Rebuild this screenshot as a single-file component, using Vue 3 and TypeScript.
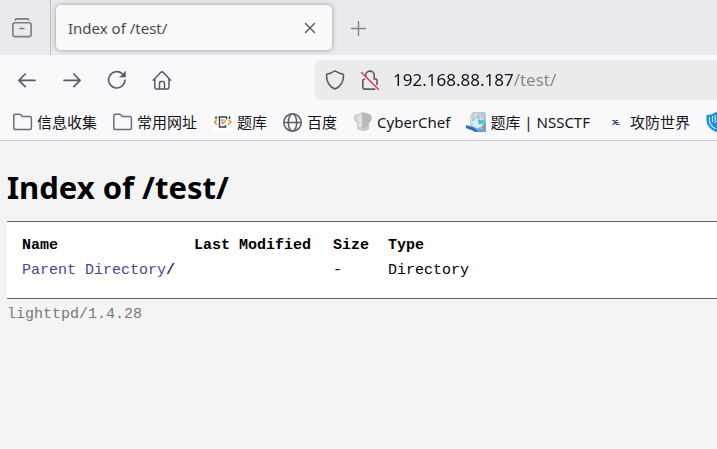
<script setup lang="ts">
import { ref } from 'vue'

type IconName = 'folder' | 'code' | 'globe' | 'chef' | 'avatar' | 'mark' | 'shield'

interface Bookmark {
  icon: IconName
  label: string
}

interface Entry {
  name: string
  modified: string
  size: string
  type: string
}

const address = ref('192.168.88.187/test/')

const bookmarks: Bookmark[] = [
  { icon: 'folder', label: '信息收集' },
  { icon: 'folder', label: '常用网址' },
  { icon: 'code', label: '题库' },
  { icon: 'globe', label: '百度' },
  { icon: 'chef', label: 'CyberChef' },
  { icon: 'avatar', label: '题库 | NSSCTF' },
  { icon: 'mark', label: '攻防世界' },
  { icon: 'shield', label: '' },
]

const entries: Entry[] = [{ name: 'Parent Directory', modified: '', size: '-', type: 'Directory' }]
</script>

<template>
  <div class="browser">
    <header class="chrome">
      <div class="tabs">
        <button class="history" type="button" aria-label="Recent browsing">
          <svg width="20" height="20" viewBox="0 0 20 20" fill="none" stroke="#7c7b84" stroke-width="1.6" stroke-linecap="round">
            <path d="M3.2 1.9Q3.8 .9 5 .9H15Q16.2 .9 16.8 1.9" />
            <rect x=".9" y="4.8" width="18.2" height="13.8" rx="2" />
            <path d="M8 10.5H12" />
          </svg>
        </button>
        <div class="tab">
          <span class="tab-title">Index of /test/</span>
          <button class="close" type="button" aria-label="Close tab">
            <svg width="12" height="12" viewBox="0 0 12 12" stroke="#4f4e56" stroke-width="1.3" stroke-linecap="round">
              <path d="M1.5 1.5L10.5 10.5M10.5 1.5L1.5 10.5" />
            </svg>
          </button>
        </div>
        <button class="new-tab" type="button" aria-label="New tab">
          <svg width="16" height="16" viewBox="0 0 16 16" stroke="#85848c" stroke-width="1.4" stroke-linecap="round">
            <path d="M8.5 1.5V15.5M1.5 8.500H15.500" />
          </svg>
        </button>
      </div>

      <nav class="toolbar">
        <div class="nav-buttons">
          <button type="button" aria-label="Back">
            <svg width="20" height="20" viewBox="0 0 20 20" fill="none" stroke="#5b5b66" stroke-width="1.7" stroke-linecap="round" stroke-linejoin="round">
              <path d="M18 10.300H2M8.200 4L1.900 10.300L8.200 16.600" />
            </svg>
          </button>
          <button type="button" aria-label="Forward">
            <svg width="20" height="20" viewBox="0 0 20 20" fill="none" stroke="#5b5b66" stroke-width="1.7" stroke-linecap="round" stroke-linejoin="round">
              <path d="M2 10.300H18M11.800 4L18.100 10.300L11.800 16.600" />
            </svg>
          </button>
          <button type="button" aria-label="Reload">
            <svg width="20" height="20" viewBox="0 0 20 20" fill="none" stroke="#5b5b66" stroke-width="1.6" stroke-linecap="round">
              <path d="M18 10A8.200 8.200 0 1 1 15.400 3.800L17 5.400" />
              <path d="M18.500 1.500V7H13Z" fill="#5b5b66" stroke-width=".6" stroke-linejoin="round" />
            </svg>
          </button>
          <button type="button" aria-label="Home">
            <svg width="20" height="20" viewBox="0 0 20 20" fill="none" stroke="#5b5b66" stroke-width="1.5" stroke-linecap="round" stroke-linejoin="round">
              <path d="M1.200 10.200L8.600 2.500Q10 1.200 11.400 2.500L18.600 10.200" />
              <path d="M2.800 9V17Q2.800 19 4.800 19H15Q17 19 17 17V9" />
              <path d="M7.500 19V13Q7.500 11.500 9 11.500H11Q12.500 11.500 12.500 13V19" />
            </svg>
          </button>
        </div>
        <div class="url-bar">
          <svg width="20" height="20" viewBox="0 0 20 20" fill="none" stroke="#5b5b60" stroke-width="1.6" stroke-linejoin="round">
            <path d="M10 .9Q14 3.300 18 4.300Q18.600 4.500 18.500 5.200Q18.500 15.500 10 19.100Q1.500 15.500 1.500 5.200Q1.400 4.500 2 4.300Q6 3.300 10 .9Z" />
          </svg>
          <svg width="20" height="20" viewBox="0 0 20 20" fill="none" stroke="#5b5b60" stroke-width="1.6" stroke-linecap="round">
            <path d="M5.800 7V5.300A4.200 4.200 0 0 1 14.200 5.300V9H15.500Q17 9 17 10.500V14.500" />
            <path d="M4.500 9.200Q2.800 9.200 2.800 11V17.500Q2.800 19.100 4.400 19.100H14.800" />
            <path d="M1.500 2.500L18.300 19.300" stroke="#e2375f" stroke-width="1.5" />
          </svg>
          <input v-model="address" class="address" type="text" aria-label="Address" spellcheck="false" />
        </div>
      </nav>

      <div class="bookmarks">
        <a v-for="(item, index) in bookmarks" :key="index" class="bookmark" href="#" :aria-label="item.label || 'Bookmark'">
          <svg v-if="item.icon === 'folder'" width="20" height="20" viewBox="0 0 20 20" fill="none" stroke="#6b6b73" stroke-width="1.5" stroke-linejoin="round">
            <path d="M.8 4Q.8 2.200 2.600 2.200H6.500Q7.300 2.200 7.800 2.800L9.300 4.600H17Q18.400 4.600 18.400 6.400V15.700Q18.400 17.500 17 17.500H2.600Q.8 17.500 .8 15.700Z" />
          </svg>
          <svg v-else-if="item.icon === 'code'" width="20" height="20" viewBox="0 0 20 20" fill="none">
            <rect width="20" height="20" rx="2" fill="#fff" />
            <path d="M5.500 5H13.500V7.500M6.500 5V15H12.500V13" stroke="#35404a" stroke-width="1.4" />
            <path d="M3 4.200V7M1.800 6H4.200M16.500 4V6.800M15.300 6H17.700" stroke="#35404a" stroke-width="1.1" />
            <path d="M8 8H11.500M8 10H10" stroke="#69747e" stroke-width=".9" />
            <path d="M3.800 7.800L1.600 10L3.800 12.800M15.600 7.800L18 10L14.800 12.800M13 8.500L9 12.500" stroke="#f18a32" stroke-width="1.5" />
          </svg>
          <svg v-else-if="item.icon === 'globe'" width="20" height="20" viewBox="0 0 20 20" fill="none" stroke="#5b5b66" stroke-width="1.5">
            <circle cx="9.500" cy="10.500" r="8.700" />
            <ellipse cx="9.500" cy="10.500" rx="4.200" ry="8.700" />
            <path d="M1 10.500H18" />
          </svg>
          <svg v-else-if="item.icon === 'chef'" width="20" height="20" viewBox="0 0 20 20">
            <path d="M3.800 17V10.500Q.5 9 .9 5.500Q1.500 2 5.500 2Q9.500-1 13.500 1.500Q18 1.500 18.500 5Q19 9 15.800 11V17Q9.800 20 3.800 17Z" fill="#cbcbcb" />
            <path d="M9 1Q12 0 13.500 1.500Q18 1.500 18.500 5Q19 9 15.800 11V17Q13 18.500 9 18.500Z" fill="#b9b9b9" />
            <path d="M4.500 4Q7 1.500 9 3V15H5.500V10Q2 7.500 4.500 4Z" fill="#e1e1e1" />
            <path d="M4 15.500Q10 18 15.600 15.500" fill="none" stroke="#d6d6d6" />
          </svg>
          <svg v-else-if="item.icon === 'avatar'" width="20" height="20" viewBox="0 0 20 20">
            <path d="M7 0H18Q20 0 20 2V20H8L4 14Q3 4 7 0Z" fill="#b5c5ca" />
            <path d="M4.500 13Q2.500 4 9 1Q16 0 17 7L13 15Z" fill="#d3dddf" />
            <path d="M7 9L11 7L17 8V14L11 16L7 14Z" fill="#d4eff1" />
            <path d="M11.500 7.500L19 8.500V11.500L13 12.500Z" fill="#48c6d4" />
            <path d="M8 3L6.500 9L10 5.500L13 2L12 7L16 4" fill="none" stroke="#a1b2b9" stroke-width=".8" />
            <path d="M0 13L8 15.500L13 20H10L0 16Z" fill="#2e70b8" />
            <path d="M10 16L20 18V20H13Z" fill="#69a2ca" />
            <path d="M17 13L20 11V18L15 16Z" fill="#8d999f" />
          </svg>
          <svg v-else-if="item.icon === 'mark'" width="20" height="20" viewBox="0 0 20 20" fill="none" stroke="#263b73" stroke-width="1.2">
            <path d="M6.200 8.500H8.500L10.500 12.500H13.500M9.500 8.800L7.200 12.800M10 8.500H12M10 10.500H12.500" />
            <path d="M6 12.700H8.500" stroke="#8494ba" />
          </svg>
          <svg v-else width="20" height="20" viewBox="0 0 20 20">
            <path d="M10 0Q14 3 19.500 3V9Q19 16 10 20Q1 16 .5 9V3Q6 3 10 0Z" fill="#168fe5" />
            <path d="M3.500 5V9Q4 14 10 17M6.500 4V10M9.200 3V11" fill="none" stroke="#d5f0ff" stroke-width="1.1" />
          </svg>
          <span v-if="item.label">{{ item.label }}</span>
        </a>
      </div>
    </header>

    <main class="page">
      <h1>Index of /test/</h1>
      <div class="list">
        <table>
          <thead>
            <tr>
              <th class="name">Name</th>
              <th class="modified">Last Modified</th>
              <th class="size">Size</th>
              <th>Type</th>
            </tr>
          </thead>
          <tbody>
            <tr v-for="entry in entries" :key="entry.name">
              <td><a href="../">{{ entry.name }}</a>/</td>
              <td>{{ entry.modified }}</td>
              <td>{{ entry.size }}</td>
              <td>{{ entry.type }}</td>
            </tr>
          </tbody>
        </table>
      </div>
      <footer class="foot">lighttpd/1.4.28</footer>
    </main>
  </div>
</template>

<style>
body {
  margin: 0;
  background: #f4f4f4;
}
</style>

<style scoped>
.browser {
  overflow: hidden;
  color: #15141a;
  font-family: "Noto Sans", "Noto Sans CJK SC", sans-serif;
}

button {
  display: flex;
  align-items: center;
  justify-content: center;
  padding: 0;
  border: 0;
  background: transparent;
}

svg {
  display: block;
  flex: none;
}

.chrome {
  background: #f9f9fb;
  border-bottom: 1px solid #ccccce;
}

.tabs {
  display: flex;
  align-items: center;
  height: 55px;
  background: #eae9ee;
}

.history {
  align-self: stretch;
  width: 51px;
  padding-right: 6px;
  border-right: 1px solid #bfbec5;
}

.tab {
  display: flex;
  align-items: center;
  justify-content: space-between;
  box-sizing: border-box;
  width: 276px;
  height: 45px;
  margin-left: 5px;
  padding: 0 16px 0 12px;
  border-radius: 5px;
  background: #fafafa;
  box-shadow: 0 0 5px rgba(0, 0, 0, 0.35);
}

.tab-title {
  color: #4a4a50;
  font-size: 15px;
  line-height: 20px;
}

.new-tab {
  width: 20px;
  height: 20px;
  margin-left: 16px;
}

.toolbar {
  display: flex;
  align-items: center;
  gap: 143px;
  height: 50px;
  padding-left: 17px;
}

.nav-buttons {
  display: flex;
  gap: 25px;
}

.url-bar {
  display: flex;
  flex: 1;
  align-items: center;
  gap: 15px;
  min-width: 0;
  height: 40px;
  padding-left: 10px;
  border-radius: 5px 0 0 5px;
  background: #ebebed;
}

.address {
  flex: 1;
  min-width: 0;
  margin-left: -2px;
  padding: 0;
  border: 0;
  outline: 0;
  background: linear-gradient(to right, #15141a 120px, #85858a 120px);
  background-clip: text;
  -webkit-background-clip: text;
  color: transparent;
  font-family: inherit;
  font-size: 17px;
  line-height: 24px;
}

.bookmarks {
  display: flex;
  gap: 16px;
  height: 33px;
  padding: 0 0 2px 13px;
}

.bookmark {
  display: flex;
  flex: none;
  align-items: center;
  gap: 4px;
  color: inherit;
  font-size: 15px;
  line-height: 20px;
  text-decoration: none;
  white-space: nowrap;
}

.page {
  padding: 24px 0 0 7px;
}

h1 {
  margin: 0 0 12px;
  color: #000;
  font-size: 31px;
  line-height: 44px;
}

.list {
  padding: 11px 14px 15px;
  border-top: 1px solid #646464;
  border-bottom: 1px solid #646464;
  background: #fff;
}

table {
  border-spacing: 0;
}

th,
td {
  padding: 0 18px 0 1px;
  color: #000;
  font-family: "Liberation Mono", monospace;
  font-size: 15px;
  line-height: 25px;
  text-align: left;
  white-space: nowrap;
}

.name {
  width: 151px;
}

.modified {
  width: 120px;
}

.size {
  width: 36px;
}

td a {
  color: #4b4693;
  text-decoration: none;
}

.foot {
  padding-top: 6px;
  color: #787878;
  font-family: "Liberation Mono", monospace;
  font-size: 15px;
  line-height: 20px;
}
</style>
